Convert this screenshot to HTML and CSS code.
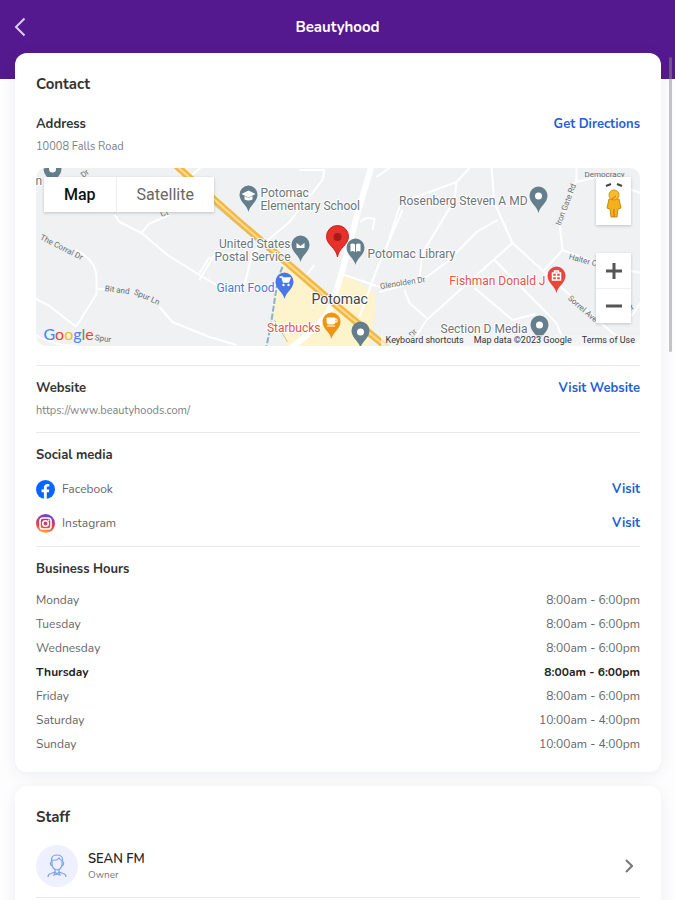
FILE: index.html
```
<!DOCTYPE html>
<html lang="en">
<head>
    <meta charset="UTF-8">
    <meta name="viewport" content="width=device-width, initial-scale=1.0">
    <title>Beautyhood</title>
    <link rel="stylesheet" href="styles.css">
</head>
<body>
    <div class="screen">
        <header class="topbar">
            <button class="back" type="button" aria-label="Back">
                <svg width="12" height="20" viewBox="0 0 12 20"><path d="M10.500 1.500 2 10l8.500 8.500" fill="none" stroke="currentColor" stroke-width="2"/></svg>
            </button>
            <h1>Beautyhood</h1>
        </header>

        <main class="content">
            <section class="card">
                <h2>Contact</h2>

                <div class="block block-first">
                    <div class="row">
                        <h3>Address</h3>
                        <a class="link" href="#">Get Directions</a>
                    </div>
                    <p class="sub">10008 Falls Road</p>

                    <div class="map">
                        <svg class="map-canvas" viewBox="0 0 605 178" preserveAspectRatio="xMidYMid slice">
                            <defs>
                                <path id="pin" d="M0 0C-1.500-7-9-10-9-17.500a9 9 0 0 1 18 0C9-10 1.500-7 0 0z"/>
                            </defs>
                            <rect width="605" height="178" fill="#eff1f3"/>
                            <path d="M247 97 239 128 237 149 251 178H334L340 145V125L309 106 298 134z" fill="#fdf3cd"/>

                            <!-- local streets -->
                            <g class="street">
                                <path d="M79 47 84 54 106 65 132 87 164 107 181 117M106 65 113 56 134 47M164 105 174 89"/>
                                <path d="M40 82Q61 92 61 110V126L41 158M-1 130 14 138 41 159M62 121H70M124 139 137 154 174 169 201 177"/>
                                <path d="M264 2H289L287 12 254 54 217 85 207 125M164 112 178 88 205 84M181 117 207 125"/>
                                <path d="M267 112 279 97M341 9 354 0M325 54Q330 48 339 51L337 62M149 13 165 0M0 167Q20 178 41 178"/>
                                <path d="M367 42 341 102 324 149M309 107 344 119 384 112M364 35 421 14 434 0M421 14 419 32 387 85 384 109M364 39 351 79"/>
                                <path d="M456 0 459 35 477 75 512 107 577 165 593 176M462 52 441 64 414 92 387 112 344 124"/>
                                <path d="M477 75 391 152 377 174M369 122 374 135 391 150M459 92 521 155 530 178M439 120 477 152 500 146"/>
                                <path d="M541 0V12L524 55 527 82 509 102M527 82 561 95 605 105M541 14 562 9 605 25M596 148 605 135"/>
                            </g>

                            <path d="M247 99C239 117 240 138 231 178" fill="none" stroke="#8db0c9" stroke-width="2" stroke-dasharray="6 2"/>
                            <path d="M179 37 247 95M239 152 252 174" fill="none" stroke="#b4c6bd" stroke-width="1"/>
                            <path d="M336-2 321 49 307 102 297 135Q290 155 255 180" fill="none" stroke="#fff" stroke-width="6"/>
                            <path d="M140-3 204 54 247 91 298 135 352 180" fill="none" stroke="#f4b843" stroke-width="7"/>
                            <path d="M140-3 204 54 247 91 298 135 352 180" fill="none" stroke="#fddd94" stroke-width="2"/>

                            <g class="street-name">
                                <text transform="translate(4 71) rotate(27)">The Corral Dr</text>
                                <text transform="translate(69 123) rotate(7)">Bit and</text>
                                <text transform="translate(98 126) rotate(24)">Spur Ln</text>
                                <text transform="translate(345 121) rotate(-9)">Glenolden Dr</text>
                                <text transform="translate(525 58) rotate(-69)">Iron Gate Rd</text>
                                <text transform="translate(533 91) rotate(15)">Halter Ct</text>
                                <text transform="translate(532 131) rotate(41)">Sorrel Ave</text>
                                <text x="549" y="9">Democracy</text>
                                <text transform="translate(593 145) rotate(-40)">Dr</text>
                                <text transform="translate(48 10) rotate(-40)">Dr</text>
                                <text transform="translate(59 172) rotate(8)">Spur</text>
                                <text transform="translate(126 49) rotate(-20)">Ct</text>
                                <text transform="translate(377 170) rotate(-50)">Dr</text>
                            </g>

                            <g class="place">
                                <text x="225" y="29">Potomac</text>
                                <text x="225" y="42">Elementary School</text>
                                <text x="255" y="80" text-anchor="end">United States</text>
                                <text x="255" y="93" text-anchor="end">Postal Service</text>
                                <text x="332" y="90">Potomac Library</text>
                                <text x="492" y="37" text-anchor="end">Rosenberg Steven A MD</text>
                                <text x="492" y="165" text-anchor="end">Section D Media</text>
                                <text x="0" y="17">n</text>
                                <text class="blue" x="239" y="124" text-anchor="end">Giant Food</text>
                                <text class="red" x="285" y="164" text-anchor="end">Starbucks</text>
                                <text class="red" x="510" y="117" text-anchor="end">Fishman Donald J</text>
                                <text class="town" x="276" y="136">Potomac</text>
                            </g>

                            <!-- school -->
                            <use href="#pin" x="213" y="44" fill="#647e8c"/>
                            <path d="M206 26l7-3.500 7 3.500-7 3.500zM209 28v3.500q4 2 8 0V28l-4 2z" fill="#fff"/>
                            <!-- post office -->
                            <use href="#pin" x="265" y="94" fill="#647e8c"/>
                            <path d="M260.500 74h9v6.500h-9zM260.500 74l4.500 3.500 4.500-3.500" fill="#fff" stroke="#647e8c"/>
                            <!-- library -->
                            <use href="#pin" x="320" y="97" fill="#647e8c"/>
                            <path d="M315 76q3-1 4.500.500V84q-2-1.500-4.500-.500zM325 76q-3-1-4.500.500V84q2-1.500 4.500-.500z" fill="#fff"/>
                            <!-- grocery -->
                            <use href="#pin" x="249" y="131" fill="#4a76e8"/>
                            <path d="M244 109h2.500l1.500 5h5l1.500-4h-7" fill="#fff" stroke="#fff" stroke-width="1.500"/>
                            <circle cx="248" cy="117" r="1.200" fill="#fff"/><circle cx="253" cy="117" r="1.200" fill="#fff"/>
                            <!-- coffee -->
                            <use href="#pin" x="296" y="171" fill="#ef9413"/>
                            <path d="M291.500 150h8v4q0 2-2 2h-4q-2 0-2-2zM291.500 158h8" fill="#fff" stroke="#fff"/>
                            <path d="M299 151h2.500v3H299" fill="none" stroke="#fff"/>
                            <!-- lodging -->
                            <use href="#pin" x="521" y="125" fill="#e5473b"/>
                            <path d="M517 105h8v7h-8zM519 105v-2h4v2M521 105v7M517 108.500h8" fill="none" stroke="#fff" stroke-width="1.500"/>
                            <g fill="#647e8c">
                                <use href="#pin" x="503" y="45"/>
                                <use href="#pin" x="504" y="174"/>
                                <use href="#pin" x="325" y="180"/>
                                <use href="#pin" x="17" y="18"/>
                            </g>
                            <g fill="#fff">
                                <circle cx="503" cy="28" r="3.500"/>
                                <circle cx="504" cy="157" r="3.500"/>
                                <circle cx="325" cy="164" r="3.500"/>
                                <circle cx="17" cy="1" r="3.500"/>
                            </g>

                            <!-- business location -->
                            <path d="M302 89C301 80 291 77 291 68.500a11 11 0 0 1 22 0C313 77 303 80 302 89z" fill="#e8312a" stroke="#c5221f"/>
                            <circle cx="302" cy="69" r="4" fill="#a51d18"/>

                            <text class="logo" x="8" y="172"><tspan fill="#4285f4">G</tspan><tspan fill="#ea4335">o</tspan><tspan fill="#fbbc04">o</tspan><tspan fill="#4285f4">g</tspan><tspan fill="#34a853">l</tspan><tspan fill="#ea4335">e</tspan></text>
                        </svg>

                        <div class="map-types">
                            <button class="map-type active" type="button">Map</button>
                            <button class="map-type" type="button">Satellite</button>
                        </div>
                        <div class="map-tools">
                            <button class="pegman" type="button" aria-label="Street View">
                                <svg width="20" height="36" viewBox="0 0 20 36">
                                    <path d="M2 3 7 1M18 3 13 1" stroke="#444" stroke-width="2"/>
                                    <path d="M5 16h10l2 9-3 1-1 8H7l-1-8-3-1z" fill="#f5b11b" stroke="#c98b12"/>
                                    <circle cx="10" cy="12" r="5" fill="#fbbc2c" stroke="#d7941a"/>
                                    <path d="M8 16l4-3M10 26v8" stroke="#b87916"/>
                                </svg>
                            </button>
                            <div class="zoom">
                                <button type="button" aria-label="Zoom in"><svg width="16" height="16" viewBox="0 0 16 16"><path d="M8 0v16M0 8h16" stroke="#555" stroke-width="3"/></svg></button>
                                <button type="button" aria-label="Zoom out"><svg width="16" height="16" viewBox="0 0 16 16"><path d="M0 8h16" stroke="#555" stroke-width="3"/></svg></button>
                            </div>
                        </div>
                        <div class="map-legal">
                            <span>Keyboard shortcuts</span>
                            <span>Map data ©2023 Google</span>
                            <span>Terms of Use</span>
                        </div>
                    </div>
                </div>

                <div class="block">
                    <div class="row">
                        <h3>Website</h3>
                        <a class="link" href="#">Visit Website</a>
                    </div>
                    <p class="sub">https://www.beautyhoods.com/</p>
                </div>

                <div class="block">
                    <h3>Social media</h3>
                    <div class="row social">
                        <svg width="19" height="19" viewBox="0 0 24 24">
                            <circle cx="12" cy="12" r="12" fill="#0866ff"/>
                            <path d="M10 24v-8.500H7V12h3V9.500C10 6.500 11.800 5 14.500 5c1 0 2.300.200 2.300.200v3h-1.500c-1.300 0-1.700.800-1.700 1.600V12h3.200l-.500 3.500h-2.700V24z" fill="#fff"/>
                        </svg>
                        <span>Facebook</span>
                        <a class="link" href="#">Visit</a>
                    </div>
                    <div class="row social">
                        <svg width="19" height="19" viewBox="0 0 24 24">
                            <defs>
                                <linearGradient id="insta" x1="0.600" y1="0" x2="0.400" y2="1">
                                    <stop offset="0" stop-color="#5a4bd6"/>
                                    <stop offset="0.350" stop-color="#c13584"/>
                                    <stop offset="0.700" stop-color="#f0483e"/>
                                    <stop offset="1" stop-color="#fdc04f"/>
                                </linearGradient>
                            </defs>
                            <circle cx="12" cy="12" r="12" fill="url(#insta)"/>
                            <rect x="5" y="5" width="14" height="14" rx="4" fill="none" stroke="#fff" stroke-width="2"/>
                            <circle cx="12" cy="12" r="3.500" fill="none" stroke="#fff" stroke-width="2"/>
                            <circle cx="16" cy="8" r="1" fill="#fff"/>
                        </svg>
                        <span>Instagram</span>
                        <a class="link" href="#">Visit</a>
                    </div>
                </div>

                <div class="block block-last">
                    <h3>Business Hours</h3>
                    <table class="hours">
                        <tr><th scope="row">Monday</th><td>8:00am - 6:00pm</td></tr>
                        <tr><th scope="row">Tuesday</th><td>8:00am - 6:00pm</td></tr>
                        <tr><th scope="row">Wednesday</th><td>8:00am - 6:00pm</td></tr>
                        <tr class="today"><th scope="row">Thursday</th><td>8:00am - 6:00pm</td></tr>
                        <tr><th scope="row">Friday</th><td>8:00am - 6:00pm</td></tr>
                        <tr><th scope="row">Saturday</th><td>10:00am - 4:00pm</td></tr>
                        <tr><th scope="row">Sunday</th><td>10:00am - 4:00pm</td></tr>
                    </table>
                </div>
            </section>

            <section class="card">
                <h2>Staff</h2>
                <a class="staff" href="#">
                    <span class="avatar">
                        <svg width="20" height="24" viewBox="0 0 20 24" fill="none" stroke="#7fa3ec" stroke-width="1.200">
                            <path d="M4.500 8V5Q5 1 10 1t5.500 4v3M5 6q5 1 7-2 1 2 3 2.500M5 7v3q0 5 5 6 5-1 5-6V7"/>
                            <path d="M4.500 8q-1.500 0-1 2t2 2M15.500 8q1.500 0 1 2t-2 2M8 15v3l2 2 2-2v-3"/>
                            <path d="M1 23q0-3 3-3.500L8 18M19 23q0-3-3-3.500L12 18M8 18l-1 3 3-1 3 1-1-3"/>
                        </svg>
                    </span>
                    <span class="person">
                        <span class="name">SEAN FM</span>
                        <span class="role">Owner</span>
                    </span>
                    <svg class="chevron" width="8" height="14" viewBox="0 0 8 14"><path d="M1 1l6 6-6 6" fill="none" stroke="#777" stroke-width="2"/></svg>
                </a>
            </section>
        </main>
        <div class="scroll-thumb"></div>
    </div>
</body>
</html>
```
FILE: styles.css
```
* {
    box-sizing: border-box;
}
body {
    margin: 0;
    font-family: Nunito, "Open Sans", "Noto Sans", sans-serif;
    font-size: 12px;
    line-height: 20px;
    color: #666;
    background: #fdfdfe;
}
h1, h2, h3, p {
    margin: 0;
}
button {
    border: none;
    padding: 0;
    background: none;
    cursor: pointer;
}
svg {
    display: block;
}
.screen {
    position: relative;
    height: 100vh;
    overflow: hidden;
}
.topbar {
    display: grid;
    grid-template-columns: 40px 1fr 40px;
    align-items: center;
    height: 79px;
    padding-bottom: 25px;
    background: #55198f;
    color: #fff;
}
.topbar h1 {
    font-size: 15px;
    font-weight: 700;
    text-align: center;
}
.back {
    display: flex;
    padding-left: 14px;
    color: #dccdec;
}
.content {
    margin: -26px 14px 0 15px;
    position: relative;
}
.card {
    margin-bottom: 14px;
    padding: 20px 21px 16px;
    background: #fff;
    border-radius: 12px;
    box-shadow: 0 3px 14px rgba(40, 45, 70, 0.08);
}
h2 {
    font-size: 15px;
    line-height: 22px;
    font-weight: 700;
    color: #333;
}
h3 {
    font-size: 13px;
    font-weight: 700;
    color: #333;
}
.block {
    padding: 12px 0 13px;
    border-top: 1px solid #e9e9eb;
}
.block-first {
    padding: 19px 0;
    border-top: none;
}
.block-last {
    padding-bottom: 0;
}
.row {
    display: flex;
    align-items: center;
    justify-content: space-between;
}
.link {
    font-size: 13px;
    color: #1f5fd8;
    font-weight: 700;
    text-decoration: none;
}
.sub {
    margin-top: 5px;
    font-size: 11px;
    line-height: 16px;
    color: #7b8087;
}

/* map */
.map {
    position: relative;
    height: 178px;
    margin-top: 13px;
    border-radius: 10px;
    overflow: hidden;
    font-family: Roboto, sans-serif;
}
.map-canvas {
    width: 100%;
    height: 100%;
}
.street {
    fill: none;
    stroke: #fff;
    stroke-width: 2;
    stroke-linejoin: round;
}
.street-name {
    font-size: 8px;
    fill: #666b70;
}
.place {
    font-size: 12px;
    fill: #6d7479;
    stroke: #fff;
    stroke-width: 2px;
    paint-order: stroke;
}
.place .blue {
    fill: #4a76e8;
}
.place .red {
    fill: #e0544a;
}
.place .town {
    font-size: 14px;
    fill: #3f4347;
}
.logo {
    font-family: Lato, sans-serif;
    font-size: 16px;
}
.map-types {
    position: absolute;
    top: 9px;
    left: 8px;
    display: flex;
    background: #fff;
    box-shadow: 0 1px 3px rgba(0, 0, 0, 0.2);
}
.map-type {
    height: 35px;
    padding: 0 20px;
    font-family: Roboto, sans-serif;
    font-size: 16px;
    color: #666;
}
.map-type.active {
    font-weight: 500;
    color: #111;
    border-right: 1px solid #eee;
}
.map-tools {
    position: absolute;
    top: 9px;
    right: 9px;
    display: flex;
    flex-direction: column;
    gap: 28px;
}
.pegman, .zoom {
    width: 35px;
    background: #fff;
    box-shadow: 0 1px 3px rgba(0, 0, 0, 0.2);
}
.pegman {
    display: grid;
    place-items: center;
    height: 48px;
}
.zoom button {
    display: grid;
    place-items: center;
    width: 100%;
    height: 35px;
}
.zoom button + button {
    border-top: 1px solid #eee;
}
.map-legal {
    position: absolute;
    right: 0;
    bottom: 0;
    display: flex;
    gap: 10px;
    padding: 0 5px;
    font-size: 9px;
    line-height: 11px;
    color: #333;
    background: rgba(245, 245, 245, 0.7);
}

/* social links and opening hours */
.social {
    gap: 7px;
    margin-top: 14px;
}
.social .link {
    margin-left: auto;
}
.hours {
    width: 100%;
    margin-top: 9px;
    border-collapse: collapse;
    line-height: 24px;
}
.hours th, .hours td {
    padding: 0;
    font-weight: 400;
    text-align: left;
}
.hours td {
    text-align: right;
}
.hours .today th, .hours .today td {
    font-weight: 700;
    color: #222;
}

/* staff */
.staff {
    display: flex;
    align-items: center;
    gap: 10px;
    margin-top: 17px;
    padding-bottom: 10px;
    border-bottom: 1px solid #e9e9eb;
    color: #777;
    text-decoration: none;
}
.avatar {
    display: grid;
    place-items: center;
    width: 42px;
    height: 42px;
    border-radius: 50%;
    background: #eef1fd;
}
.person {
    display: flex;
    flex-direction: column;
}
.name {
    font-size: 13px;
    font-weight: 600;
    line-height: 18px;
    color: #222;
}
.role {
    font-size: 10px;
    line-height: 14px;
}
.chevron {
    margin: 0 7px 0 auto;
}
.scroll-thumb {
    position: absolute;
    top: 57px;
    right: 3px;
    width: 3px;
    height: 295px;
    border-radius: 2px;
    background: rgba(140, 140, 140, 0.5);
}
```
